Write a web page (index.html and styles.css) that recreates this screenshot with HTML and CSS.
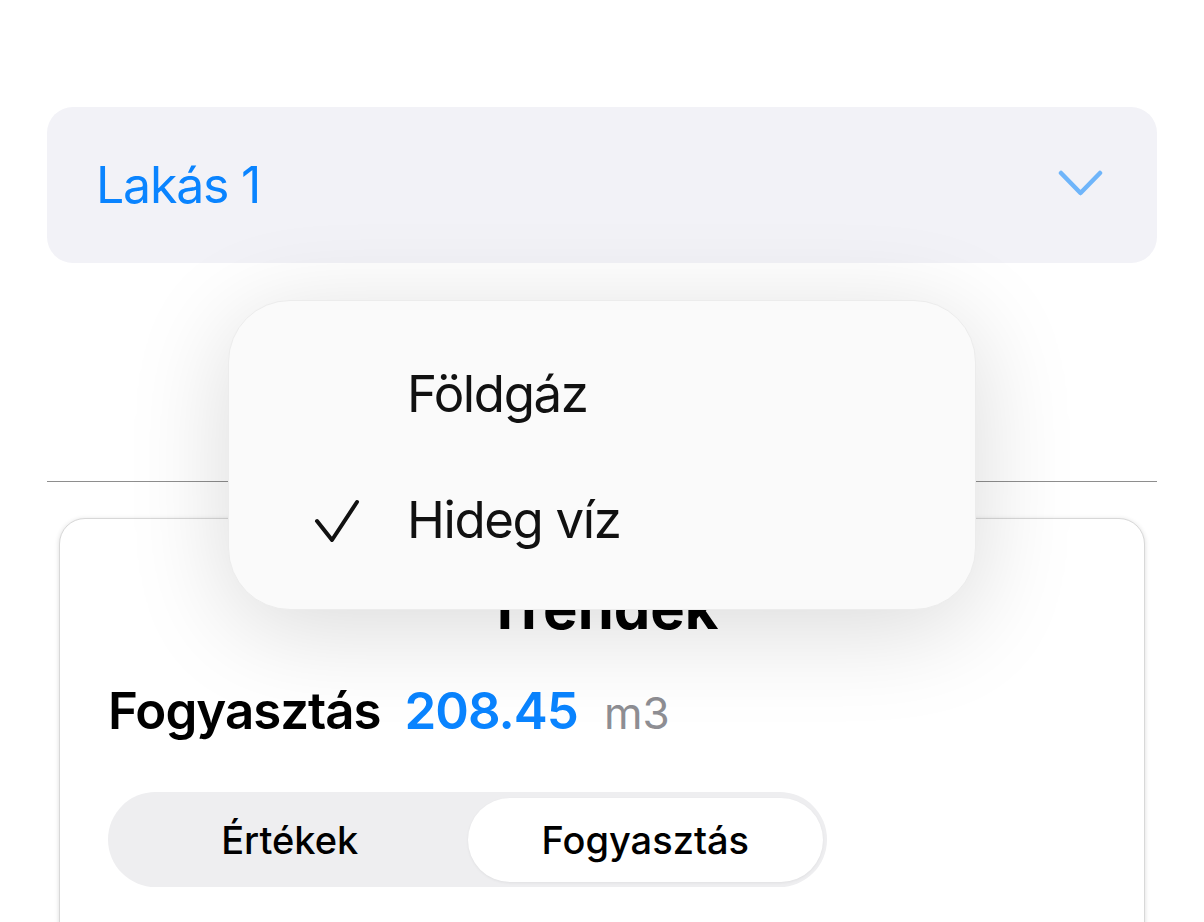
FILE: index.html
```html
<!DOCTYPE html>
<html lang="hu">
<head>
<meta charset="utf-8">
<title>Trendek</title>
<link rel="stylesheet" href="styles.css">
</head>
<body>
<div class="screen">
  <div class="select">
    <span class="select-label">Lakás 1</span>
    <svg class="chevron" width="45" height="28" viewBox="0 0 45 28" aria-hidden="true">
      <path d="M3 3 L22.5 23 L42 3" fill="none" stroke="#6fb5fa" stroke-width="4.5" stroke-linecap="round" stroke-linejoin="round"/>
    </svg>
  </div>
  <div class="divider"></div>
  <div class="card">
    <h1 class="card-title">Trendek</h1>
    <div class="stat">
      <span class="stat-label">Fogyasztás</span>
      <span class="stat-value">208.45</span>
      <span class="stat-unit">m3</span>
    </div>
    <div class="segmented">
      <div class="segment">Értékek</div>
      <div class="segment segment-active">Fogyasztás</div>
    </div>
  </div>

  <div class="menu">
    <div class="menu-item">
      <span class="menu-check"></span>
      <span class="menu-text">Földgáz</span>
    </div>
    <div class="menu-item">
      <span class="menu-check">
        <svg width="48" height="48" viewBox="0 0 48 48" aria-hidden="true">
          <path d="M4 23 L19 42 L44 4" fill="none" stroke="#111" stroke-width="4" stroke-linecap="round" stroke-linejoin="round"/>
        </svg>
      </span>
      <span class="menu-text">Hideg víz</span>
    </div>
  </div>
</div>
</body>
</html>
```

FILE: styles.css
```css
* { box-sizing: border-box; }

html, body {
  margin: 0;
  padding: 0;
  background: #ffffff;
  font-family: Inter, "Noto Sans", "Liberation Sans", sans-serif;
  color: #000;
}

.screen {
  position: relative;
  width: 1204px;
  height: 922px;
  overflow: hidden;
  padding: 107px 47px 0 47px;
}

.select {
  height: 156px;
  background: #f2f2f7;
  border-radius: 26px;
  display: flex;
  align-items: center;
  justify-content: space-between;
  padding: 0 54px 0 49px;
}

.select-label {
  font-size: 50px;
  line-height: 60px;
  color: #0a84ff;
  font-weight: 400;
  letter-spacing: -1.2px;
}

.chevron { display: block; margin-top: -2px; }

.divider {
  margin-top: 218px;
  height: 1px;
  background: #8e8e8e;
}

.card {
  margin: 36px 12px 0 12px;
  height: 520px;
  border-radius: 26px;
  border: 1px solid #d8d8d8;
  box-shadow: 0 1px 5px rgba(0, 0, 0, 0.14);
  background: #fff;
  padding: 54px 48px 0 48px;
}

.card-title {
  margin: 0;
  text-align: center;
  font-size: 58px;
  line-height: 70px;
  font-weight: 700;
}

.stat {
  margin-top: 38px;
  display: flex;
  align-items: baseline;
  font-size: 51px;
  line-height: 60px;
  letter-spacing: -1px;
}

.stat-label { font-weight: 600; }
.stat-value { font-weight: 600; color: #0a84ff; margin-left: 24px; }
.stat-unit { font-weight: 400; color: #8e8e93; margin-left: 26px; font-size: 44px; letter-spacing: 0; }

.segmented {
  margin-top: 49px;
  width: 719px;
  height: 95px;
  border-radius: 48px;
  background: #eeeef0;
  padding: 6px 4px 5px 4px;
  display: grid;
  grid-template-columns: 1fr 1fr;
}

.segment {
  display: flex;
  align-items: center;
  justify-content: center;
  font-size: 38px;
  font-weight: 500;
  border-radius: 42px;
}

.segment-active {
  background: #fff;
  box-shadow: 0 1px 3px rgba(0, 0, 0, 0.06);
}

.menu {
  position: absolute;
  left: 228px;
  top: 300px;
  width: 748px;
  height: 310px;
  border-radius: 62px;
  background: #fafafa;
  border: 1px solid #ececec;
  box-shadow: 0 18px 100px rgba(0, 0, 0, 0.15);
  padding: 30px 0 0 0;
}

.menu-item {
  height: 126px;
  display: flex;
  align-items: center;
}

.menu-check {
  width: 178px;
  display: flex;
  justify-content: flex-start;
  padding-left: 84px;
  margin-top: 4px;
}

.menu-text {
  font-size: 51px;
  line-height: 60px;
  font-weight: 400;
  color: #111;
  letter-spacing: -1.4px;
}
```
